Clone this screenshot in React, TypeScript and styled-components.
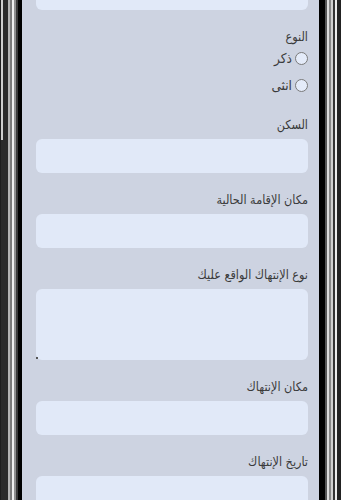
import React from "react";
import styled, { createGlobalStyle } from "styled-components";

const Global = createGlobalStyle`
  html, body { margin: 0; padding: 0; background: #000; }
  body { font-family: "DejaVu Sans Condensed", "DejaVu Sans", sans-serif; }
  * { box-sizing: border-box; }
`;

const Device = styled.div`
  display: flex;
  width: 341px;
  height: 500px;
  overflow: hidden;
  background: #000;
`;

const LeftBezel = styled.div`
  position: relative;
  flex: 0 0 22px;
  background: linear-gradient(
    to right,
    #1e1e1e 0 1px,
    #2b2b2b 1px 8px,
    #b4b4b4 8px 10px,
    #7a7a7a 10px 12px,
    #efefef 12px 14px,
    #8e8e8e 14px 16px,
    #3a3a3a 16px 18px,
    #000 18px 22px
  );
`;

const SideButton = styled.div`
  position: absolute;
  left: 1px;
  top: 0;
  width: 2px;
  height: 140px;
  background: #cfcfcf;
`;

const RightBezel = styled.div`
  flex: 0 0 22px;
  background: linear-gradient(
    to right,
    #000 0 6px,
    #555 6px 8px,
    #dcdcdc 8px 10px,
    #888 10px 12px,
    #cfcfcf 12px 14px,
    #333 14px 16px,
    #ececec 16px 18px,
    #222 18px 22px
  );
`;

const Screen = styled.div`
  flex: 1 1 auto;
  background: #cdd3e1;
  padding: 0 11px 0 14px;
  overflow: hidden;
  direction: rtl;
`;

const Form = styled.form`
  display: flex;
  flex-direction: column;
  gap: 18px;
  margin-top: -24px;
`;

const Field = styled.div<{ $extra?: number }>`
  display: flex;
  flex-direction: column;
  padding-bottom: ${(p) => p.$extra ?? 0}px;
`;

const Label = styled.label<{ $mb?: number }>`
  display: block;
  font-size: 12.5px;
  line-height: 18px;
  color: #3a3a3a;
  margin-bottom: ${(p) => p.$mb ?? 5}px;
  text-align: right;
`;

const TextInput = styled.input`
  display: block;
  width: 100%;
  height: 34px;
  border: none;
  border-radius: 6px;
  background: #e1e9f8;
  outline: none;
  font-family: inherit;
  font-size: 13px;
  padding: 0 10px;
`;

const AreaWrap = styled.div`
  position: relative;
`;

const TextArea = styled.textarea`
  display: block;
  width: 100%;
  height: 71px;
  border: none;
  border-radius: 6px;
  background: #e1e9f8;
  outline: none;
  font-family: inherit;
  font-size: 13px;
  padding: 6px 10px;
  margin: 0;
  resize: none;
`;

const Grip = styled.span`
  position: absolute;
  left: 0;
  bottom: 1px;
  width: 2px;
  height: 2px;
  background: #555;
`;

const RadioList = styled.div`
  display: flex;
  flex-direction: column;
  gap: 9px;
`;

const RadioRow = styled.label`
  display: flex;
  align-items: center;
  gap: 3px;
  height: 18px;
  font-size: 13.5px;
  color: #3a3a3a;
`;

const Radio = styled.input.attrs({ type: "radio" })`
  appearance: none;
  -webkit-appearance: none;
  margin: 0;
  width: 13px;
  height: 13px;
  border-radius: 50%;
  border: 1px solid #7a7a7a;
  background: #e4ebf9;
  flex: 0 0 auto;
`;

export default function App() {
  return (
    <>
      <Global />
      <Device>
        <LeftBezel>
          <SideButton />
        </LeftBezel>
        <Screen>
          <Form>
            <Field>
              <TextInput type="text" aria-label="field" />
            </Field>
            <Field $extra={4}>
              <Label $mb={3}>النوع</Label>
              <RadioList>
                <RadioRow>
                  <Radio name="gender" value="male" />
                  ذكر
                </RadioRow>
                <RadioRow>
                  <Radio name="gender" value="female" />
                  انثى
                </RadioRow>
              </RadioList>
            </Field>
            <Field>
              <Label>السكن</Label>
              <TextInput type="text" />
            </Field>
            <Field>
              <Label>مكان الإقامة الحالية</Label>
              <TextInput type="text" />
            </Field>
            <Field>
              <Label>نوع الإنتهاك الواقع عليك</Label>
              <AreaWrap>
                <TextArea />
                <Grip />
              </AreaWrap>
            </Field>
            <Field>
              <Label>مكان الإنتهاك</Label>
              <TextInput type="text" />
            </Field>
            <Field>
              <Label>تاريخ الإنتهاك</Label>
              <TextInput type="text" />
            </Field>
          </Form>
        </Screen>
        <RightBezel />
      </Device>
    </>
  );
}
